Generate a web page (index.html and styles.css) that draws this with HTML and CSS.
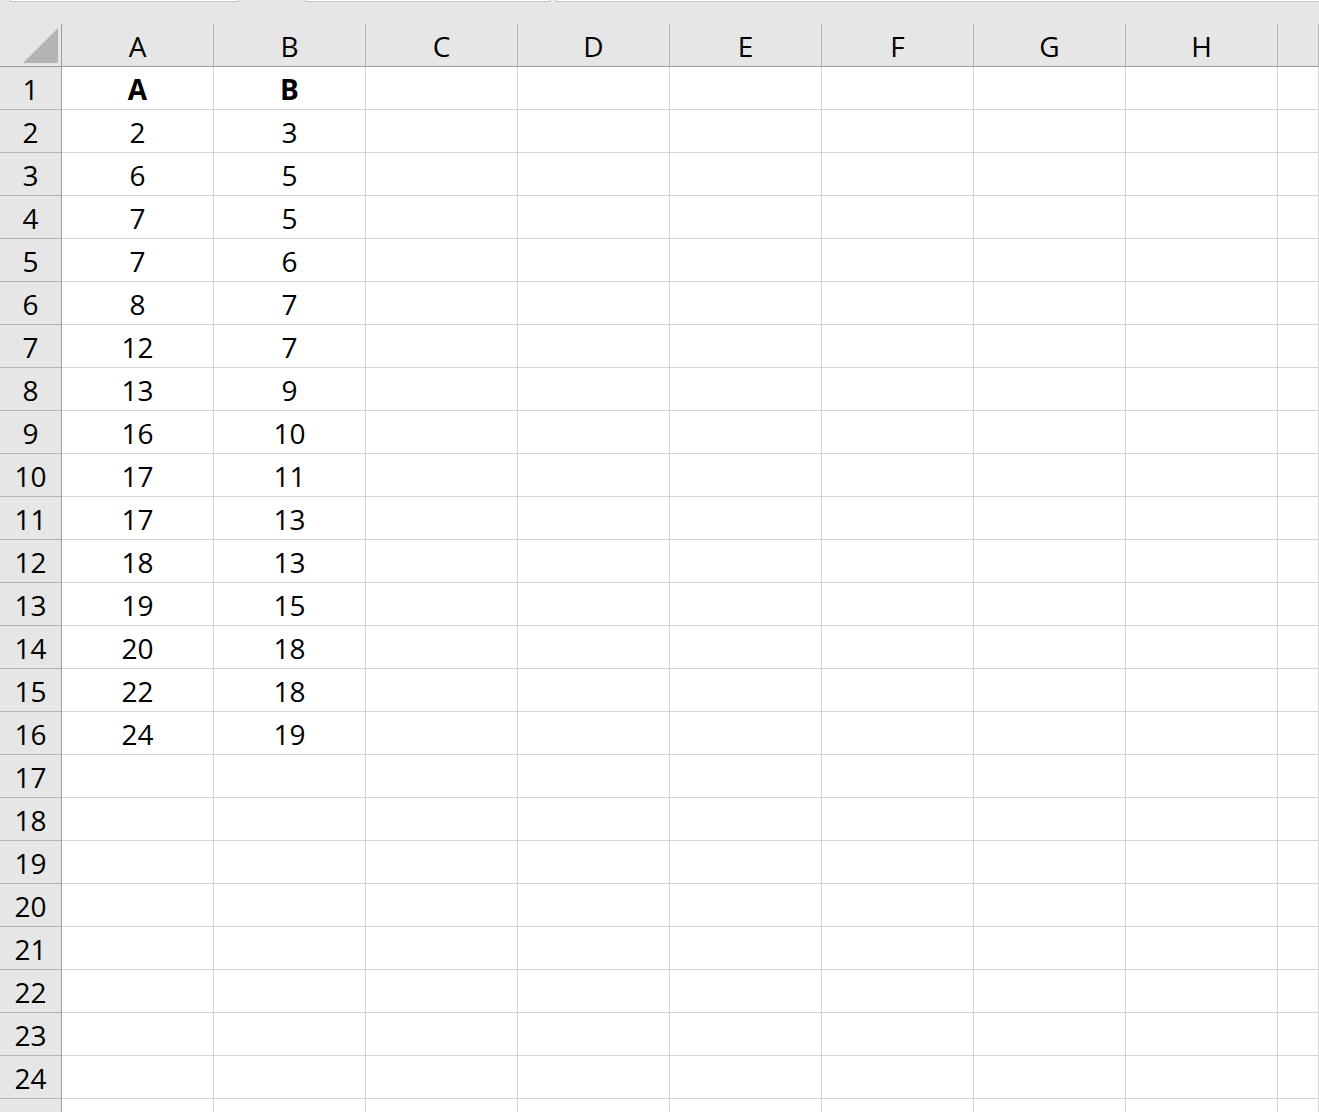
FILE: index.html
```
<!DOCTYPE html>
<html lang="en">
<head>
  <meta charset="UTF-8">
  <meta name="viewport" content="width=device-width, initial-scale=1.0">
  <title>Sheet1</title>
  <link rel="stylesheet" href="styles.css">
</head>
<body>
  <div class="topbar">
    <div class="stub stub-name"></div>
    <div class="stub stub-fx"></div>
    <div class="stub stub-formula"></div>
  </div>
  <div class="sheet" id="sheet">
    <div class="corner"><span class="triangle"></span></div>
  </div>
  <script>
    // Column letters and the two data columns
    const letters = ['A', 'B', 'C', 'D', 'E', 'F', 'G', 'H', ''];
    const colA = ['A', 2, 6, 7, 7, 8, 12, 13, 16, 17, 17, 18, 19, 20, 22, 24];
    const colB = ['B', 3, 5, 5, 6, 7, 7, 9, 10, 11, 13, 13, 15, 18, 18, 19];
    const totalRows = 25;

    const sheet = document.getElementById('sheet');

    function addCell(cls, text) {
      const div = document.createElement('div');
      div.className = cls;
      if (text !== undefined) div.textContent = text;
      sheet.appendChild(div);
    }

    // Header row
    letters.forEach(l => addCell('col-head', l));

    // Body rows
    for (let r = 1; r <= totalRows; r++) {
      addCell('row-head', r);
      for (let c = 0; c < letters.length; c++) {
        let value;
        if (c === 0) value = colA[r - 1];
        if (c === 1) value = colB[r - 1];
        addCell(r === 1 ? 'cell bold' : 'cell', value);
      }
    }
  </script>
</body>
</html>
```

FILE: styles.css
```
body {
  margin: 0;
  font-family: "Open Sans", "Noto Sans", Arial, sans-serif;
  background: #fff;
  overflow: hidden;
  height: 1112px;
}
.topbar {
  display: flex;
  height: 24px;
  background: #e6e6e6;
}
.stub {
  height: 1px;
  background: #fff;
  border: 1px solid #c6c6c6;
  border-top: none;
}
.stub-name {
  margin-left: 10px;
  width: 227px;
}
.stub-fx {
  margin-left: 66px;
  width: 243px;
}
.stub-formula {
  margin-left: 6px;
  flex: 1;
  border-right: none;
}
.sheet {
  display: grid;
  grid-template-columns: 62px repeat(8, 152px) 1fr;
  grid-auto-rows: 43px;
}
.sheet > div {
  box-sizing: border-box;
  display: flex;
  align-items: center;
  justify-content: center;
  font-size: 28px;
  line-height: 1;
  color: #000;
}
.corner {
  background: #e6e6e6;
  border-right: 1px solid #9e9e9e;
  border-bottom: 1px solid #9b9b9b;
  padding: 0 3px 3px 0;
}
.sheet > .corner {
  align-items: flex-end;
  justify-content: flex-end;
}
.triangle {
  width: 35px;
  height: 35px;
  background: #b4b4b4;
  clip-path: polygon(100% 0, 100% 100%, 0 100%);
}
.col-head {
  background: #e6e6e6;
  border-right: 1px solid #b4b4b4;
  border-bottom: 1px solid #9b9b9b;
  padding-top: 1px;
}
.col-head:last-child {
  border-right: none;
}
.row-head {
  background: #e6e6e6;
  border-right: 1px solid #9e9e9e;
  border-bottom: 1px solid #b4b4b4;
  padding-top: 1px;
}
.cell {
  border-right: 1px solid #d4d4d4;
  border-bottom: 1px solid #d4d4d4;
  padding-top: 1px;
}
.bold {
  font-weight: bold;
}
```
